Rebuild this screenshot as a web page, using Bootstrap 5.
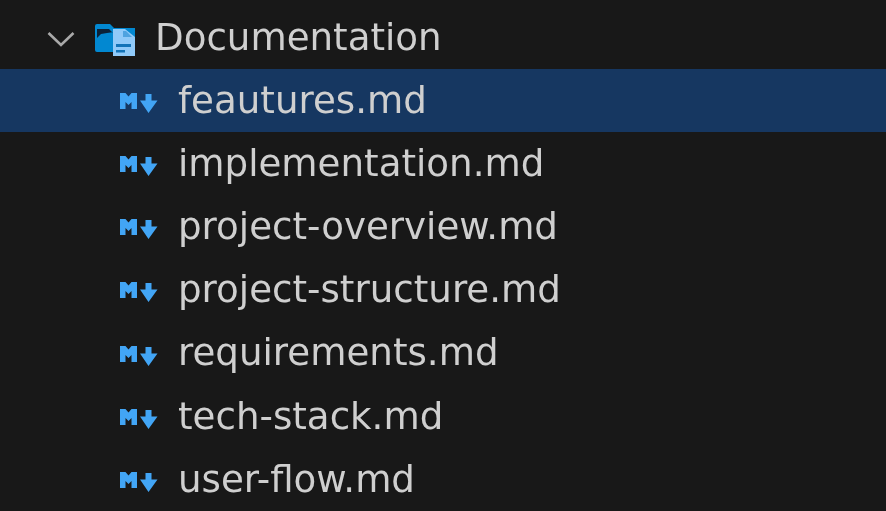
<!DOCTYPE html>
<html><head><meta charset="utf-8">
<link href="https://cdn.jsdelivr.net/npm/bootstrap@5.3.0/dist/css/bootstrap.min.css" rel="stylesheet">
<style>
html,body{height:100%;background:#181818;overflow:hidden}
.tree{padding-top:6px;font-family:"DejaVu Sans",sans-serif;font-size:37.2px;color:#cfcfcf}
.tree-row{height:63.2px;white-space:nowrap}
.tree-row.active-row{background:#163761}
.folder-row{padding-left:47px}
.file-row{padding-left:120px}
.chev{width:28px;height:16px;margin-right:19px;margin-top:2px;filter:blur(.6px)}
.folder-ic{width:43px;height:36px;margin-right:18px;filter:blur(.7px)}
.md-ic{width:38px;height:24px;margin-right:20px;margin-top:2px;filter:blur(.7px)}
.row-text{line-height:1;margin-top:-1px;filter:blur(.5px)}
.folder-row .row-text{margin-top:1px}
</style></head><body>
<div class="tree">
<div class="tree-row folder-row d-flex align-items-center">
<svg class="chev" viewBox="0 0 28 16"><path d="M1.500 2 14 14 26.500 2" fill="none" stroke="#a9a9a9" stroke-width="2.600"/></svg>
<svg class="folder-ic" viewBox="0 0 43 36"><path d="M1 6a2 2 0 0 1 2-2h13l4 4h21v24H3a2 2 0 0 1-2-2z" fill="#0288d1"/><path d="M3 18V9h12l3 3h2l-7 1-6 1z" fill="#0c2238"/><path d="M19 9h12l10 8v19H19z" fill="#90caf9"/><path d="M22 24h15v3H22zM22 30h9v2.500h-9z" fill="#1273b8"/><path d="M29 11h3l6 6h-9z" fill="#4fa3e0"/></svg>
<span class="row-text">Documentation</span></div>
<div class="tree-row file-row active-row d-flex align-items-center"><svg class="md-ic" viewBox="0 0 38 24"><use href="#md"/></svg><span class="row-text">feautures.md</span></div>
<div class="tree-row file-row d-flex align-items-center"><svg class="md-ic" viewBox="0 0 38 24"><use href="#md"/></svg><span class="row-text">implementation.md</span></div>
<div class="tree-row file-row d-flex align-items-center"><svg class="md-ic" viewBox="0 0 38 24"><use href="#md"/></svg><span class="row-text">project-overview.md</span></div>
<div class="tree-row file-row d-flex align-items-center"><svg class="md-ic" viewBox="0 0 38 24"><use href="#md"/></svg><span class="row-text">project-structure.md</span></div>
<div class="tree-row file-row d-flex align-items-center"><svg class="md-ic" viewBox="0 0 38 24"><use href="#md"/></svg><span class="row-text">requirements.md</span></div>
<div class="tree-row file-row d-flex align-items-center"><svg class="md-ic" viewBox="0 0 38 24"><use href="#md"/></svg><span class="row-text">tech-stack.md</span></div>
<div class="tree-row file-row d-flex align-items-center"><svg class="md-ic" viewBox="0 0 38 24"><use href="#md"/></svg><span class="row-text">user-flow.md</span></div>
</div>
<svg width="0" height="0" class="d-block"><defs><g id="md" fill="#42a5f5"><path d="M0 3h5.500l3 3.500 3-3.500H17v16h-5.500v-7l-3 3-3-3v7H0z"/><path d="M25.500 4h6v6.500H37.500L28.500 23 20 10.500h5.500z"/></g></defs></svg>
</body></html>
